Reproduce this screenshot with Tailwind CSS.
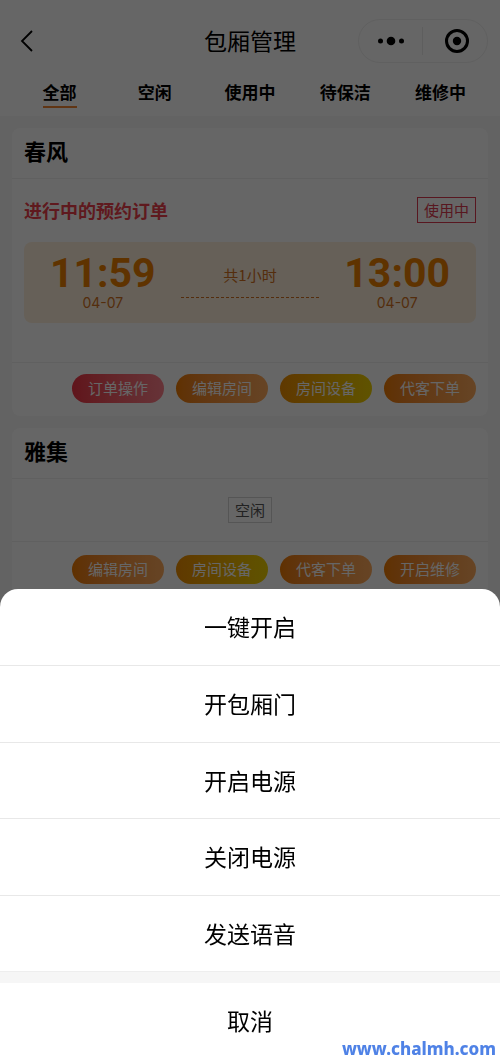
<!DOCTYPE html>
<html lang="zh-CN">
<head>
<meta charset="utf-8">
<meta name="viewport" content="width=device-width, initial-scale=1">
<title>包厢管理</title>
<script src="https://cdn.jsdelivr.net/npm/@tailwindcss/browser@4"></script>
</head>
<body class="relative flex min-h-screen flex-col bg-[#f7f7f7] font-['Noto_Sans_CJK_SC',sans-serif] text-black">

<header class="bg-white">
  <div class="grid h-[82px] grid-cols-[1fr_auto_1fr] items-center px-3">
    <button type="button" aria-label="返回" class="flex size-8 items-center justify-center">
      <svg class="h-6 w-4" viewBox="0 0 16 24" fill="none" stroke="#000" stroke-width="1.800"><path d="M12 2 2 12l10 10"/></svg>
    </button>
    <h1 class="pb-0.5 text-[23px] leading-8">包厢管理</h1>
    <div class="flex h-11 w-[130px] items-center justify-self-end rounded-full border border-[#f0f0f0]">
      <button type="button" aria-label="更多" class="flex w-16 justify-center">
        <svg class="h-3 w-7" viewBox="0 0 28 12"><circle cx="3.500" cy="6" r="2.500"/><circle cx="14" cy="6" r="4.300"/><circle cx="24.500" cy="6" r="2.500"/></svg>
      </button>
      <span class="h-7 w-px bg-[#ececec]"></span>
      <button type="button" aria-label="关闭" class="flex w-16 justify-center pl-1">
        <svg class="size-6" viewBox="0 0 24 24"><circle cx="12" cy="12" r="10.500" fill="none" stroke="#000" stroke-width="3"/><circle cx="12" cy="12" r="4.200"/></svg>
      </button>
    </div>
  </div>
  <nav class="grid h-[34px] grid-cols-5 justify-items-center px-3 text-[17px] leading-5 font-bold">
    <a href="#" class="h-[26px] border-b-2 border-[#ef8534]">全部</a>
    <a href="#">空闲</a>
    <a href="#">使用中</a>
    <a href="#">待保洁</a>
    <a href="#">维修中</a>
  </nav>
</header>

<main class="flex flex-col gap-3 p-3">
  <section class="rounded-lg bg-white">
    <h2 class="border-b border-[#f0f0f0] px-3 pt-1.5 pb-3 text-[22px] leading-8 font-bold">春风</h2>
    <div class="flex items-center justify-between px-3 pt-[18px]">
      <h3 class="text-[18px] leading-6 font-bold text-[#ee3f4d]">进行中的预约订单</h3>
      <span class="border border-[#dd3b50] px-1.5 text-[15px] leading-6 text-[#dd3b50]">使用中</span>
    </div>
    <div class="mx-3 mt-[19px] mb-[39px] flex h-[81px] items-center justify-between rounded-lg bg-[#fff0dc] px-[26px] text-[#d27222]">
      <div class="text-center">
        <p class="font-['Roboto',sans-serif] text-[41px] leading-10 font-bold text-[#ed8000]">11:59</p>
        <p class="font-['Inter',sans-serif] text-sm leading-5">04-07</p>
      </div>
      <div class="flex w-[138px] flex-col items-center gap-2.5 pb-1">
        <p class="text-[15px] leading-6">共1小时</p>
        <span class="w-full border-t border-dashed border-[#d27222]"></span>
      </div>
      <div class="text-center">
        <p class="font-['Roboto',sans-serif] text-[41px] leading-10 font-bold text-[#ed8000]">13:00</p>
        <p class="font-['Inter',sans-serif] text-sm leading-5">04-07</p>
      </div>
    </div>
    <div class="flex justify-end gap-3 border-t border-[#f0f0f0] px-3 pt-[11px] pb-[13px] text-[15px] leading-7 text-white">
      <button type="button" class="w-[92px] rounded-full bg-linear-to-r from-[#f03546] to-[#ff808c] pb-px">订单操作</button>
      <button type="button" class="w-[92px] rounded-full bg-linear-to-r from-[#ee7b00] to-[#ffab5c] pb-px">编辑房间</button>
      <button type="button" class="w-[92px] rounded-full bg-linear-to-r from-[#ee8d00] to-[#eed000] pb-px">房间设备</button>
      <button type="button" class="w-[92px] rounded-full bg-linear-to-r from-[#ee7b00] to-[#ffab5c] pb-px">代客下单</button>
    </div>
  </section>

  <section class="rounded-lg bg-white">
    <h2 class="border-b border-[#f0f0f0] px-3 pt-1.5 pb-3 text-[22px] leading-8 font-bold">雅集</h2>
    <div class="flex justify-center py-[18px]">
      <span class="border border-[#d4d4d4] px-1.5 text-[15px] leading-6 text-[#555]">空闲</span>
    </div>
    <div class="flex justify-end gap-3 border-t border-[#f0f0f0] px-3 py-[13px] text-[15px] leading-7 text-white">
      <button type="button" class="w-[92px] rounded-full bg-linear-to-r from-[#ee7b00] to-[#ffab5c] pb-px">编辑房间</button>
      <button type="button" class="w-[92px] rounded-full bg-linear-to-r from-[#ee8d00] to-[#eed000] pb-px">房间设备</button>
      <button type="button" class="w-[92px] rounded-full bg-linear-to-r from-[#ee7b00] to-[#ffab5c] pb-px">代客下单</button>
      <button type="button" class="w-[92px] rounded-full bg-linear-to-r from-[#ee7b00] to-[#ffab5c] pb-px">开启维修</button>
    </div>
  </section>
</main>

<div class="fixed inset-0 flex flex-col justify-end bg-black/60">
  <div role="dialog" aria-label="操作" class="flex flex-col overflow-hidden rounded-t-[18px] bg-white text-[23px]">
    <button type="button" class="h-[77px] border-b border-[#e8e8e8] pb-0.5">一键开启</button>
    <button type="button" class="h-[77px] border-b border-[#e8e8e8] pb-0.5">开包厢门</button>
    <button type="button" class="h-[76px] border-b border-[#e8e8e8]">开启电源</button>
    <button type="button" class="h-[77px] border-b border-[#e8e8e8] pb-0.5">关闭电源</button>
    <button type="button" class="h-[76px] border-b border-[#eee]">发送语音</button>
    <button type="button" class="h-[87px] border-t-[11px] border-[#f6f6f6] pb-0.5">取消</button>
  </div>
  <a href="#" class="absolute right-1 bottom-0 font-['Noto_Sans','Noto_Sans_CJK_SC',sans-serif] text-[17px] leading-5 font-extrabold text-[#4f82e6]">www.chalmh.com</a>
</div>
</body>
</html>
